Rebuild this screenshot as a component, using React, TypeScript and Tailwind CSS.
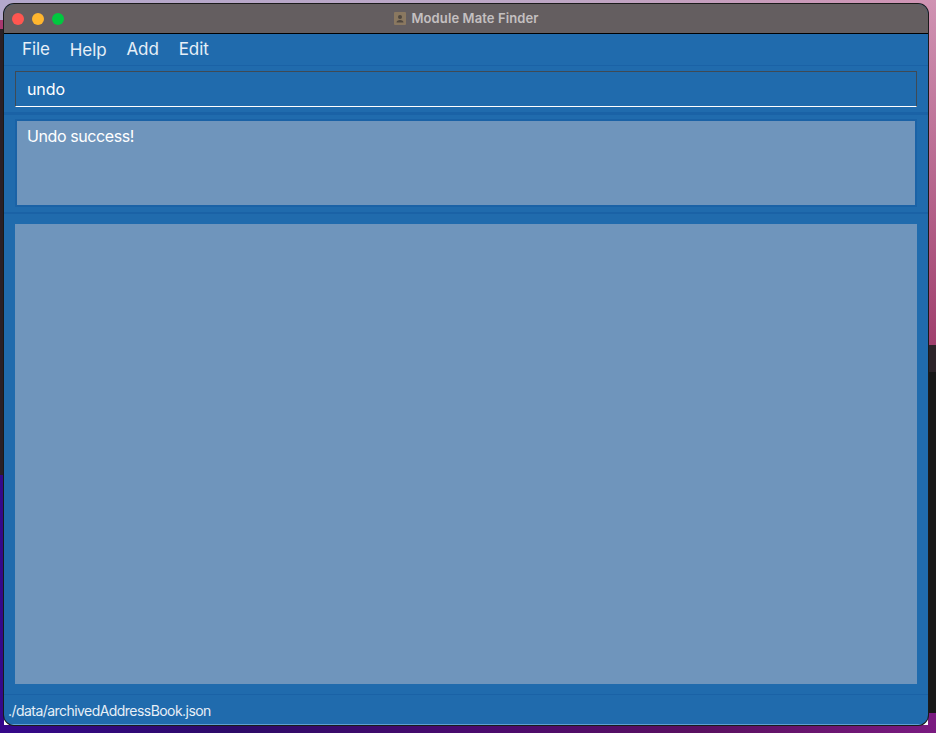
const font = "font-['Inter','Liberation_Sans',sans-serif]";

function TrafficLights() {
  return (
    <div className="flex items-center gap-2">
      <span className="h-3 w-3 rounded-full bg-[#ff5650]" />
      <span className="h-3 w-3 rounded-full bg-[#ffb62e]" />
      <span className="h-3 w-3 rounded-full bg-[#00c83f]" />
    </div>
  );
}

// Small document proxy icon next to the window title
function ProxyIcon() {
  return (
    <svg width="12" height="13" viewBox="0 0 12 13" className="shrink-0">
      <rect width="12" height="13" rx="1" fill="#8a7860" />
      <circle cx="6" cy="5" r="2" fill="#4f473f" />
      <path d="M2.5 10.5c0-1.8 1.5-2.6 3.5-2.6s3.5.8 3.5 2.6z" fill="#4f473f" />
    </svg>
  );
}

export default function App() {
  return (
    <div className={`relative h-[733px] w-[936px] overflow-hidden px-1 pt-1 ${font}`}>
      {/* Desktop showing around the window */}
      <div className="absolute inset-x-0 top-0 h-[30px] bg-[linear-gradient(to_right,#b3a8cc,#bda6c4_60%,#d093b3)]" />
      <div className="absolute left-0 top-[20px] h-[9px] w-[4px] bg-[#a8386f]" />
      <div className="absolute left-0 top-[29px] h-[446px] w-[4px] bg-[#2a2026]" />
      <div className="absolute bottom-0 left-0 h-[258px] w-[4px] bg-[#35088a]" />
      <div className="absolute right-0 top-0 h-[345px] w-[8px] bg-[linear-gradient(to_bottom,#d093b3,#a03f6d)]" />
      <div className="absolute right-0 top-[345px] h-[27px] w-[8px] bg-[#2c2329]" />
      <div className="absolute right-0 top-[372px] h-[341px] w-[8px] bg-[#181818]" />
      <div className="absolute bottom-0 right-0 h-[20px] w-[8px] bg-[#7a1a80]" />
      <div className="absolute inset-x-0 bottom-0 h-[8px] bg-[linear-gradient(to_right,#35088a,#2d0a68_25%,#4a0a6e_50%,#5a1060_75%,#7a1a80)]" />

      <div className="relative flex h-[721px] w-[924px] flex-col overflow-hidden rounded-[10px] bg-[#206bad] shadow-[0_0_0_1px_#1a1a1a]">
        {/* Title bar */}
        <div className="relative flex h-[30px] shrink-0 items-center border-b border-black bg-[#645e60] pl-2">
          <TrafficLights />
          <div className="absolute inset-0 flex items-center justify-center gap-[6px] text-[13px] font-semibold tracking-[0.1px] text-[#c4c0c1]">
            <ProxyIcon />
            Module Mate Finder
          </div>
        </div>

        {/* Menu */}
        <div className="flex h-[32px] shrink-0 items-center gap-[20px] border-b border-[#1a62a6] pl-[18px] text-[17px] tracking-[-0.1px] text-[#e6eff7]">
          <span>File</span>
          <span className="mt-[2px]">Help</span>
          <span>Add</span>
          <span>Edit</span>
        </div>

        {/* Command box */}
        <div className="h-[49px] shrink-0 border-b-[3px] border-[#1a62a6] px-[11px] pt-[5px]">
          <div className="flex h-[36px] items-center border border-[#3f4a55] border-b-white pl-[11px] text-[16px] tracking-[-0.1px] text-white">
            undo
          </div>
        </div>

        {/* Result */}
        <div className="h-[99px] shrink-0 border-b-2 border-[#1a62a6] px-[11px] pt-[4px]">
          <div className="h-[88px] border-2 border-[#1a62a6] bg-[#6f95bc] px-[10px] pt-[3px] text-[16px] tracking-[-0.4px] text-white">
            Undo success!
          </div>
        </div>

        {/* List */}
        <div className="h-[481px] shrink-0 border-b border-[#1a62a6] px-[11px] pt-[10px]">
          <div className="h-[460px] bg-[#6f95bc]" />
        </div>

        {/* Status */}
        <div className="flex flex-1 items-center border-b border-[#5f9fd4] pl-[4px] pt-[2px] text-[14px] tracking-[-0.55px] text-[#e6eff7]">
          ./data/archivedAddressBook.json
        </div>
      </div>
    </div>
  );
}
